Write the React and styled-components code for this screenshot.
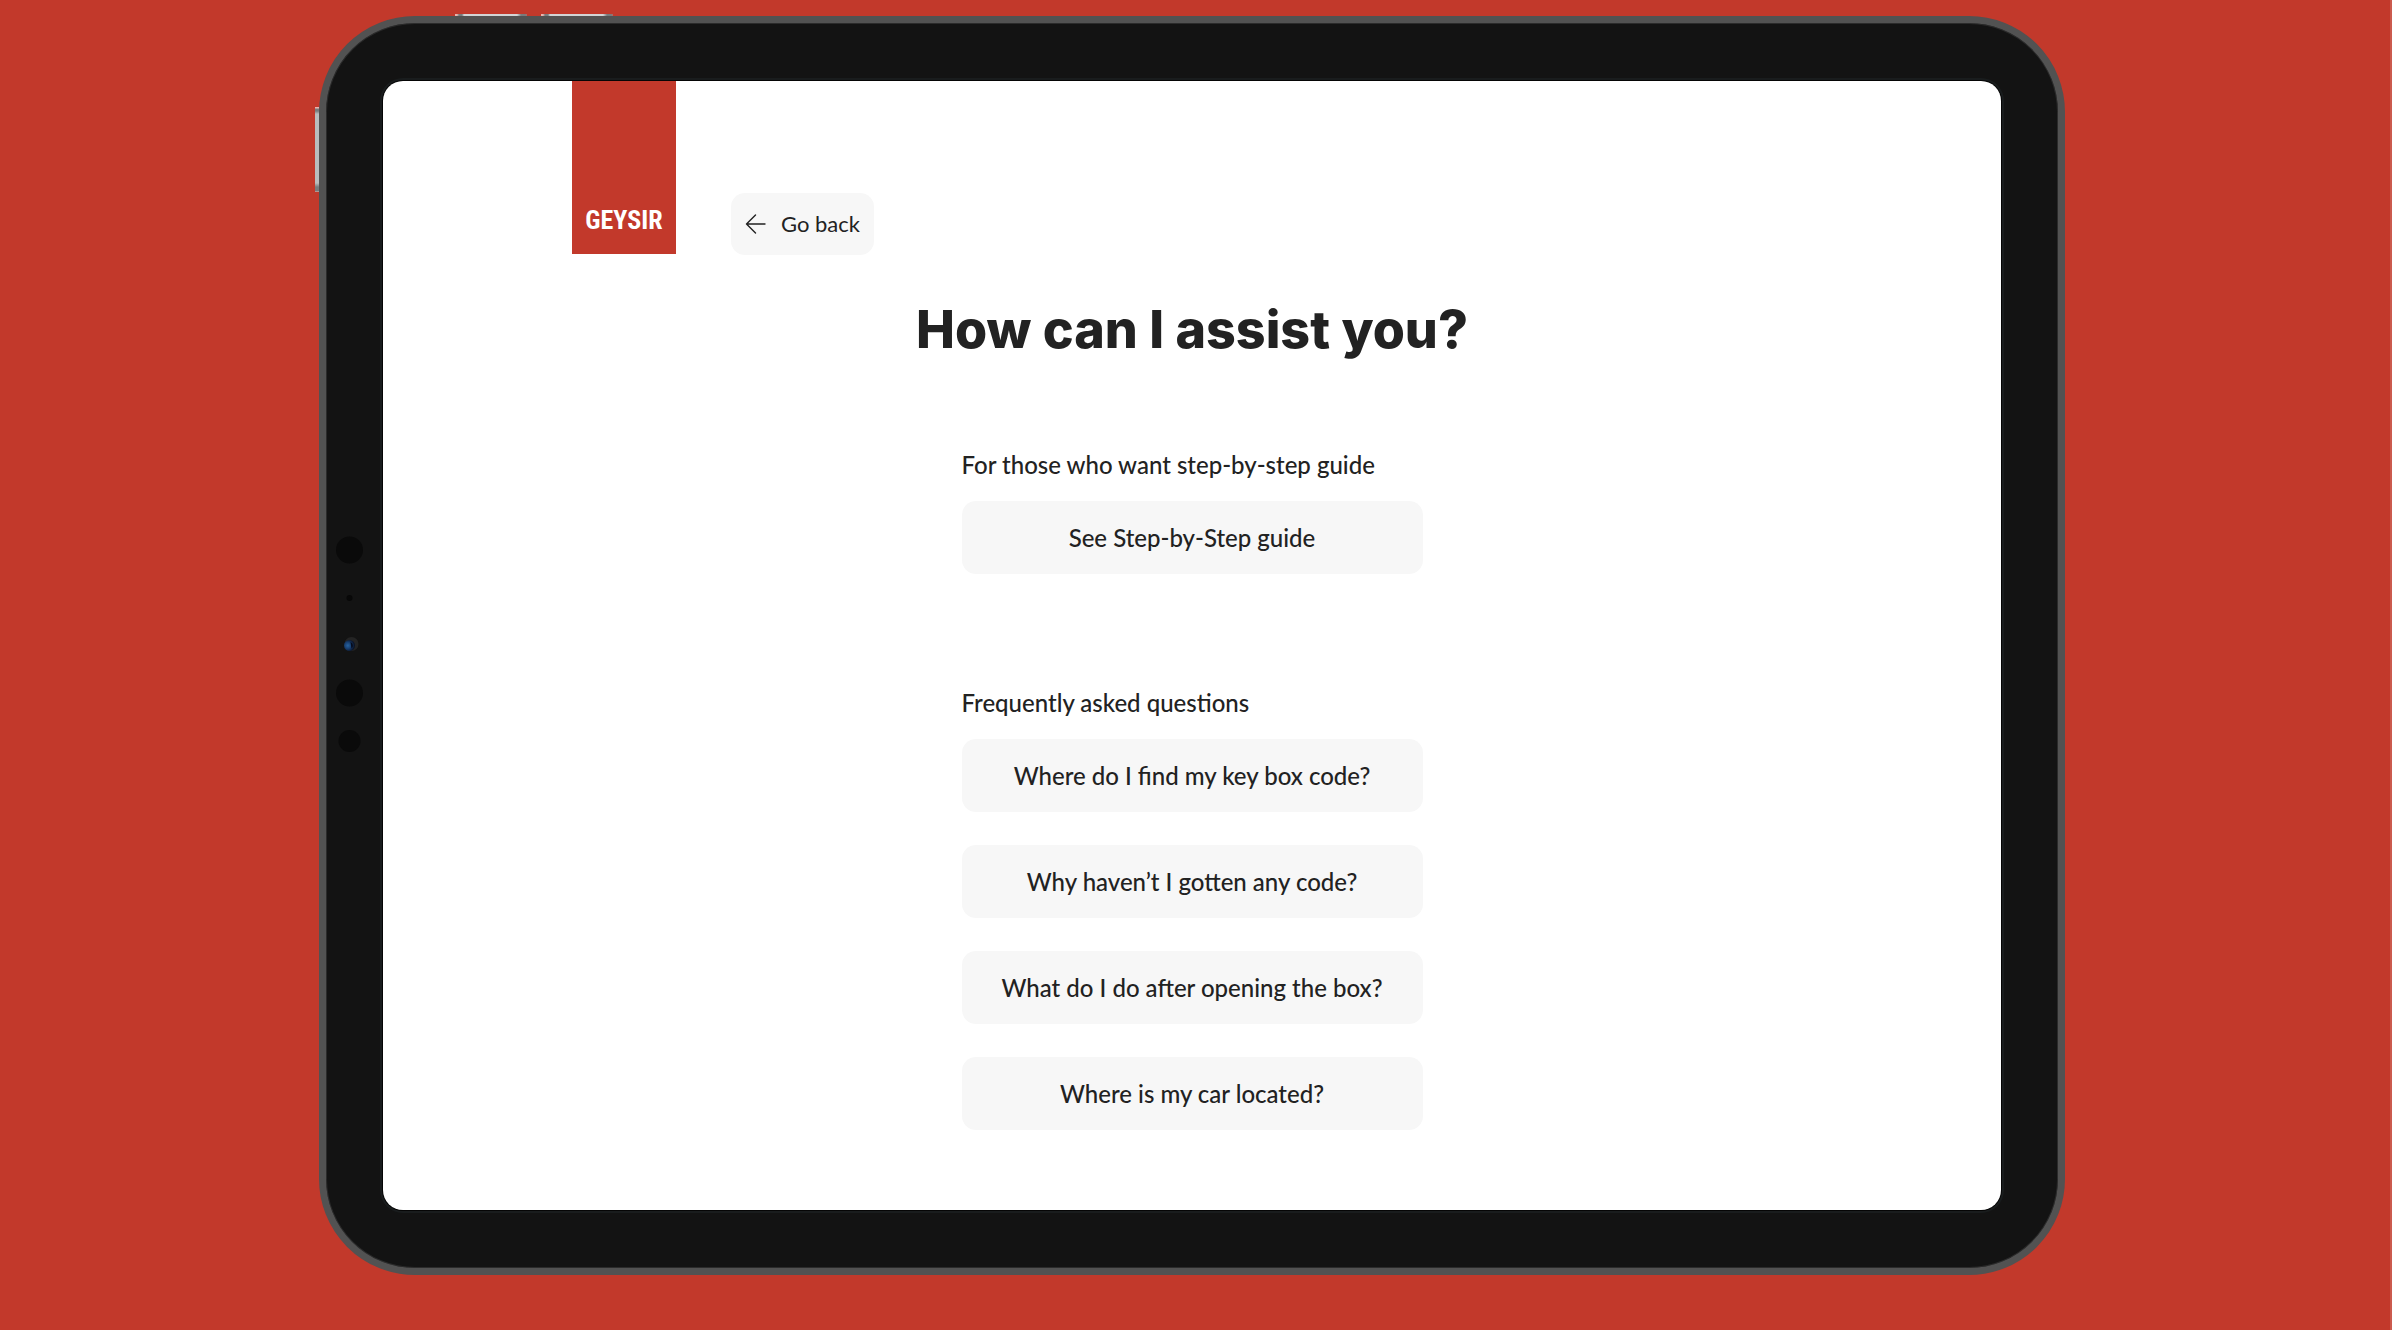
import React from 'react';
import styled, { createGlobalStyle } from 'styled-components';

const color = {
  brand: '#c2392b',
  ink: '#222222',
  surface: '#f7f7f7',
  bezel: '#131313',
  frame: '#525252',
};

const GlobalStyle = createGlobalStyle`
  *, *::before, *::after { box-sizing: border-box; }
  body {
    margin: 0;
    background: ${color.brand};
    color: ${color.ink};
    font-family: Lato, "Liberation Sans", sans-serif;
  }
  button { font: inherit; color: inherit; border: 0; cursor: pointer; }
`;

const Stage = styled.div`
  min-height: 100vh;
  padding: 16px 325px 55px 319px;
  border-right: 2px solid #cb5a4e;
`;

const Tablet = styled.div`
  position: relative;
  display: grid;
  grid-template-columns: 57px minmax(0, 1fr) 57px;
  padding: 58px 0;
  border: 7px solid ${color.frame};
  border-radius: 96px;
  background: ${color.bezel};
  box-shadow: inset 0 0 0 1px #2b2b2b;
`;

const VolumeKey = styled.span`
  position: absolute;
  top: -9px;
  left: ${({ $left }) => $left}px;
  width: 72px;
  height: 2px;
  background: linear-gradient(90deg, #e9b5ae 0 2px, #777b7c 4px 7px, #d3d5d6 9px 62px, #777b7c 66px 70px, #b06a63);
`;

const PowerKey = styled.span`
  position: absolute;
  top: 84px;
  left: -11px;
  width: 4px;
  height: 85px;
  background: linear-gradient(#e9b5ae 0 1px, #777b7c 2px 4px, #b9bcbd 7px 76px, #777b7c 80px 84px, #e9b5ae);
`;

const SensorStrip = styled.div`
  display: flex;
  align-items: center;
  padding: 0 0 2px 10px;
`;

const Screen = styled.main`
  grid-column: 2;
  padding-bottom: 80px;
  border-radius: 20px;
  background: #ffffff;
  box-shadow: 0 0 0 1px #050505, 0 0 0 3px #191c1d;
`;

const Header = styled.header`
  display: flex;
  align-items: flex-end;
  gap: 55px;
  height: 174px;
  padding-left: 189px;
`;

const Logo = styled.a`
  display: flex;
  align-items: flex-end;
  justify-content: center;
  align-self: flex-start;
  width: 104px;
  height: 173px;
  padding-bottom: 21px;
  background: ${color.brand};
  color: #ffffff;
  font: 700 26px/26px "Roboto Condensed", Roboto, sans-serif;
  text-decoration: none;
`;

const BackButton = styled.button`
  display: flex;
  align-items: center;
  gap: 15px;
  height: 62px;
  padding: 0 14px;
  border-radius: 14px;
  background: ${color.surface};
  font-size: 22px;
  line-height: 30px;
`;

const Title = styled.h1`
  margin: 43px 0 0;
  font: 800 52px/64px Inter, "Liberation Sans", sans-serif;
  text-align: center;
`;

const Content = styled.div`
  display: grid;
  gap: 114px;
  width: 461px;
  margin: 88px auto 0;
`;

const SectionTitle = styled.h2`
  margin: 0 0 21px;
  font-size: 24px;
  font-weight: 500;
  line-height: 30px;
`;

const Options = styled.div`
  display: grid;
  gap: 33px;
`;

const OptionButton = styled.button`
  height: 73px;
  padding: 0 16px;
  border-radius: 14px;
  background: ${color.surface};
  font-size: 24px;
  font-weight: 500;
  line-height: 30px;
`;

const sections = [
  { title: 'For those who want step-by-step guide', options: ['See Step-by-Step guide'] },
  {
    title: 'Frequently asked questions',
    options: [
      'Where do I find my key box code?',
      'Why haven’t I gotten any code?',
      'What do I do after opening the box?',
      'Where is my car located?',
    ],
  },
];

function ArrowLeft() {
  return (
    <svg width="21" height="20" viewBox="0 0 21 20" fill="none" stroke={color.ink} strokeWidth="1.4" strokeLinecap="round" strokeLinejoin="round" aria-hidden="true">
      <path d="M20 10H1.5M10.5 1L1.5 10l9 9" />
    </svg>
  );
}

function Sensors() {
  return (
    <svg width="28" height="218" viewBox="0 0 28 218" aria-hidden="true">
      <defs>
        <radialGradient id="lens" cx="0.35" cy="0.5" r="0.6">
          <stop offset="0" stopColor="#28639f" />
          <stop offset="0.5" stopColor="#173e70" />
          <stop offset="1" stopColor="#0b1224" />
        </radialGradient>
      </defs>
      <circle cx="13.5" cy="14" r="13.5" fill="#0a0a0a" />
      <circle cx="13.5" cy="62" r="3" fill="#080808" />
      <circle cx="15.5" cy="108" r="7" fill="#242424" />
      <circle cx="13.5" cy="109.500" r="5.5" fill="url(#lens)" />
      <path d="M14.5 106a3.800 3.800 0 0 1 1 6.500" fill="#070b1c" />
      <circle cx="13.5" cy="157" r="13.500" fill="#0a0a0a" />
      <circle cx="13.5" cy="205" r="11" fill="#0a0a0a" />
    </svg>
  );
}

export default function App() {
  return (
    <>
      <GlobalStyle />
      <Stage>
        <Tablet>
          <VolumeKey $left={129} />
          <VolumeKey $left={215} />
          <PowerKey />
          <SensorStrip>
            <Sensors />
          </SensorStrip>
          <Screen>
            <Header>
              <Logo href="#">GEYSIR</Logo>
              <BackButton type="button">
                <ArrowLeft />
                Go back
              </BackButton>
            </Header>
            <Title>How can I assist you?</Title>
            <Content>
              {sections.map(({ title, options }) => (
                <section key={title}>
                  <SectionTitle>{title}</SectionTitle>
                  <Options>
                    {options.map((label) => (
                      <OptionButton key={label} type="button">{label}</OptionButton>
                    ))}
                  </Options>
                </section>
              ))}
            </Content>
          </Screen>
        </Tablet>
      </Stage>
    </>
  );
}
